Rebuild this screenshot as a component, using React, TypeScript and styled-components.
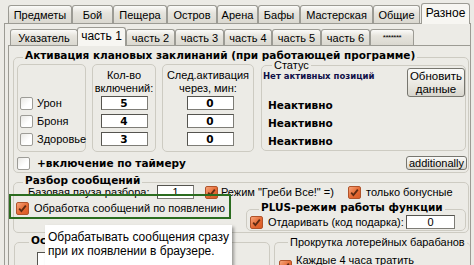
import React from "react";
import styled, { createGlobalStyle } from "styled-components";

const SANS = `"Liberation Sans", Arial, sans-serif`;
const BOLD = `"DejaVu Sans", Verdana, sans-serif`;
const FACE = "#ecebe6";
const LINE = "#cdcbc2";

const GlobalStyle = createGlobalStyle`
  html, body { margin: 0; padding: 0; }
  body {
    background: ${FACE};
    font-family: ${SANS};
    font-size: 11px;
    color: #000;
  }
`;

const Window = styled.div`
  position: relative;
  width: 474px;
  height: 265px;
  overflow: hidden;
  background: ${FACE};
  display: flex;
  flex-direction: column;
`;

/* ---------- tabs ---------- */

const TabStrip = styled.div<{ $inner?: boolean }>`
  display: flex;
  align-items: flex-end;
  flex: none;
  height: ${(p) => (p.$inner ? 21 : 23)}px;
  padding-left: ${(p) => (p.$inner ? 5 : 8)}px;
  position: relative;
  z-index: 2;
`;

const Tab = styled.div<{ $w: number; $active?: boolean; $inner?: boolean; $ml?: number }>`
  box-sizing: border-box;
  flex: none;
  width: ${(p) => p.$w}px;
  height: ${(p) => (p.$inner ? 16 : 18) + (p.$active ? 3 : 0)}px;
  margin-left: ${(p) => p.$ml ?? 0}px;
  margin-bottom: ${(p) => (p.$active ? -1 : 0)}px;
  border: 1px solid #9c9b94;
  border-bottom: none;
  border-radius: 3px 3px 0 0;
  background: ${(p) =>
    p.$active ? "#f7f6f2" : "linear-gradient(#fbfbf9, #e6e4dd 40%, #dad8d0)"};
  display: flex;
  align-items: center;
  justify-content: center;
  padding-bottom: ${(p) => (p.$active ? 2 : 0)}px;
  font-size: ${(p) => (p.$active ? 12 : 11)}px;
  line-height: 12px;
  white-space: nowrap;
  position: relative;
  z-index: ${(p) => (p.$active ? 2 : 1)};
`;

const Stars = styled.span`
  font-size: 8px;
  align-self: flex-start;
  margin-top: 2px;
  letter-spacing: -0.5px;
`;

const OuterPanel = styled.div`
  flex: 1;
  margin-left: 4px;
  width: 467px;
  box-sizing: border-box;
  border: 1px solid #9c9b94;
  border-bottom: none;
  display: flex;
  flex-direction: column;
`;

const InnerPanel = styled.div`
  flex: 1;
  margin-left: 3px;
  border-top: 1px solid #9c9b94;
  border-left: 1px solid #9c9b94;
  display: flex;
  flex-direction: column;
`;

/* ---------- group boxes ---------- */

const GroupBox = styled.fieldset`
  margin: 0;
  padding: 0;
  min-width: 0;
  border: 1px solid ${LINE};
  border-radius: 5px;
  box-sizing: border-box;
`;

const Title = styled.legend<{ $plain?: boolean }>`
  margin-left: 9px;
  padding: 0 2px ${(p) => (p.$plain ? 0 : 4)}px;
  font-family: ${(p) => (p.$plain ? SANS : BOLD)};
  font-weight: ${(p) => (p.$plain ? 400 : 700)};
  font-size: ${(p) => (p.$plain ? 11 : 10.5)}px;
  line-height: 13px;
  white-space: nowrap;
`;

const SpellGroup = styled(GroupBox)`
  margin: 3px 1px 0 4px;
  padding-bottom: 2px;
`;

const SpellRow = styled.div`
  display: flex;
  align-items: flex-start;
  margin-top: -2px;
  padding-left: 3px;
`;

const Cell = styled.div<{ $w: number }>`
  box-sizing: border-box;
  width: ${(p) => p.$w}px;
  height: 88px;
  margin-right: 6px;
  border: 1px solid ${LINE};
  border-radius: 5px;
  display: flex;
  flex-direction: column;
  align-items: center;
  padding-top: 4px;
`;

const CheckCell = styled(Cell)`
  align-items: flex-start;
  padding: 31px 0 0 2px;
  gap: 4px;
`;

const CellHead = styled.div`
  text-align: center;
  line-height: 13px;
  margin-bottom: 1px;
  white-space: nowrap;
`;

const Inputs = styled.div<{ $shift?: number }>`
  display: flex;
  flex-direction: column;
  gap: 4px;
  margin-left: ${(p) => p.$shift ?? 0}px;
`;

const Field = styled.div<{ $w: number; $bold?: boolean }>`
  box-sizing: border-box;
  flex: none;
  width: ${(p) => p.$w}px;
  height: 14px;
  background: #fff;
  border: 1px solid #7d7c76;
  border-top-color: #55544f;
  border-left-color: #55544f;
  text-align: center;
  font-family: ${(p) => (p.$bold ? BOLD : SANS)};
  font-weight: ${(p) => (p.$bold ? 700 : 400)};
  font-size: ${(p) => (p.$bold ? 10.5 : 11)}px;
  line-height: 12px;
`;

const StatusGroup = styled(GroupBox)`
  width: 205px;
  height: 92px;
  margin: -5px 0 0 1px;
  padding: 0 0 0 1px;
`;

const StatusTop = styled.div`
  display: flex;
  align-items: flex-start;
  margin-top: -4px;
`;

const NoItems = styled.div`
  margin-top: 3px;
  font-family: ${BOLD};
  font-weight: 700;
  font-size: 8.5px;
  line-height: 10px;
  color: #101048;
  white-space: nowrap;
`;

const Button = styled.div<{ $tall?: boolean }>`
  box-sizing: border-box;
  margin-left: auto;
  padding: 0 2px;
  height: ${(p) => (p.$tall ? 29 : 14)}px;
  min-width: ${(p) => (p.$tall ? 58 : 0)}px;
  border: 1px solid #77766f;
  border-radius: 3px;
  background: linear-gradient(#fafaf8, #e9e7e0 60%, #d8d6ce);
  display: flex;
  align-items: center;
  justify-content: center;
  text-align: center;
  line-height: 13px;
  font-size: ${(p) => (p.$tall ? 11.5 : 11)}px;
  white-space: nowrap;
`;

const StatusLines = styled.div`
  padding-left: 5px;
  margin-top: -1px;
`;

const StatusLine = styled.div`
  height: 18px;
  line-height: 18px;
  font-family: ${BOLD};
  font-weight: 700;
  font-size: 10.5px;
`;

const SpellFooter = styled.div`
  display: flex;
  align-items: center;
  height: 14px;
  margin-top: 4px;
  padding: 0 1px 0 3px;
`;

/* ---------- check boxes ---------- */

const Box = styled.span<{ $on?: boolean }>`
  box-sizing: border-box;
  flex: none;
  width: 13px;
  height: 13px;
  border-radius: 2px;
  border: 1px solid ${(p) => (p.$on ? "#b0532a" : "#9d9c97")};
  background: ${(p) =>
    p.$on
      ? "linear-gradient(135deg, #f6a57c, #e56a33 55%, #d85a26)"
      : "linear-gradient(135deg, #e9e8e4, #ffffff 60%)"};
  display: flex;
  align-items: center;
  justify-content: center;
`;

const CheckLine = styled.div<{ $bold?: boolean; $gap?: number }>`
  display: flex;
  align-items: center;
  gap: ${(p) => p.$gap ?? 4}px;
  height: 14px;
  white-space: nowrap;
  font-family: ${(p) => (p.$bold ? BOLD : SANS)};
  font-weight: ${(p) => (p.$bold ? 700 : 400)};
  font-size: ${(p) => (p.$bold ? 10.5 : 11)}px;
`;

function Check({ on }: { on?: boolean }) {
  return (
    <Box $on={on}>
      {on && (
        <svg width="9" height="9" viewBox="0 0 9 9">
          <path d="M1.2 4.6 L3.4 7 L7.8 1.6" fill="none" stroke="#5e2a12" strokeWidth="1.8" />
        </svg>
      )}
    </Box>
  );
}

/* ---------- message parsing ---------- */

const ParseGroup = styled(GroupBox)`
  margin: 1px 1px 0 4px;
  padding-bottom: 1px;
`;

const PauseRow = styled.div`
  display: flex;
  align-items: center;
  height: 14px;
  margin-top: -6px;
  padding-left: 14px;
`;

const Caption = styled.span<{ $w: number }>`
  flex: none;
  width: ${(p) => p.$w}px;
  white-space: nowrap;
`;

const ModeCheck = styled(CheckLine)`
  margin-left: 11px;
  width: 143px;
`;

const ModeRow = styled.div`
  display: flex;
  align-items: flex-start;
  margin-top: 2px;
  padding-left: 2px;
`;

const PlusGroup = styled(GroupBox)`
  width: 220px;
  margin: 0 2px 0 auto;
  padding: 0 0 1px 3px;
`;

const PlusRow = styled.div`
  display: flex;
  align-items: center;
  height: 14px;
  margin-top: -3px;
  padding-right: 10px;
`;

const GiftField = styled(Field)`
  margin-left: auto;
`;

/* ---------- bottom groups ---------- */

const BottomRow = styled.div`
  display: flex;
  align-items: flex-start;
  margin-left: 5px;
`;

const OtherGroup = styled(GroupBox)`
  width: 256px;
  height: 40px;
  margin-top: 1px;
  padding: 1px 0 0 5px;
`;

const OtherField = styled(Field)`
  margin-left: 17px;
`;

const OtherCheck = styled.div`
  margin-top: 1px;
`;

const LotteryGroup = styled(GroupBox)`
  flex: 1;
  height: 40px;
  margin: 3px 0 0 4px;
  border-right: none;
  padding: 1px 0 0 4px;
`;

const TwoLine = styled.div`
  line-height: 13px;
  font-size: 11px;
  margin-top: 2px;
`;

const LotteryLine = styled.div`
  display: flex;
  align-items: center;
  gap: 4px;
  margin-top: 2px;
`;

/* ---------- overlays ---------- */

const Highlight = styled.div`
  position: absolute;
  left: 9px;
  top: 194px;
  width: 222px;
  height: 25px;
  box-sizing: border-box;
  border: 2px solid #2b6c1f;
  pointer-events: none;
`;

const Tooltip = styled.div`
  position: absolute;
  left: 45px;
  top: 225px;
  width: 187px;
  height: 46px;
  box-sizing: border-box;
  padding: 5px 0 0 3px;
  background: #fff;
  box-shadow: 2px 2px 3px rgba(0, 0, 0, 0.35);
  font-size: 12px;
  line-height: 14px;
  white-space: nowrap;
`;

const outerTabs: [string, number][] = [
  ["Предметы", 64],
  ["Бой", 41],
  ["Пещера", 54],
  ["Остров", 50],
  ["Арена", 41],
  ["Бафы", 42],
  ["Мастерская", 73],
  ["Общие", 47],
];

const innerTabs: [string, number][] = [
  ["часть 2", 49],
  ["часть 3", 49],
  ["часть 4", 48],
  ["часть 5", 49],
  ["часть 6", 49],
];

const spells = [
  { name: "Урон", count: "5", next: "0" },
  { name: "Броня", count: "4", next: "0" },
  { name: "Здоровье", count: "3", next: "0" },
];

export default function App() {
  return (
    <Window>
      <GlobalStyle />
      <TabStrip>
        {outerTabs.map(([t, w]) => (
          <Tab key={t} $w={w}>
            {t}
          </Tab>
        ))}
        <Tab $w={49} $ml={1} $active>
          Разное
        </Tab>
      </TabStrip>

      <OuterPanel>
        <TabStrip $inner>
          <Tab $w={68} $inner>
            Указатель
          </Tab>
          <Tab $w={49} $ml={-1} $inner $active>
            часть 1
          </Tab>
          {innerTabs.map(([t, w]) => (
            <Tab key={t} $w={w} $inner>
              {t}
            </Tab>
          ))}
          <Tab $w={44} $inner>
            <Stars>*******</Stars>
          </Tab>
        </TabStrip>

        <InnerPanel>
          <SpellGroup>
            <Title>Активация клановых заклинаний (при работающей программе)</Title>
            <SpellRow>
              <CheckCell $w={69}>
                {spells.map((s) => (
                  <CheckLine key={s.name}>
                    <Check />
                    {s.name}
                  </CheckLine>
                ))}
              </CheckCell>
              <Cell $w={64}>
                <CellHead>
                  Кол-во
                  <br />
                  включений:
                </CellHead>
                <Inputs>
                  {spells.map((s) => (
                    <Field key={s.name} $w={47} $bold>
                      {s.count}
                    </Field>
                  ))}
                </Inputs>
              </Cell>
              <Cell $w={92}>
                <CellHead>
                  След.активация
                  <br />
                  через, мин:
                </CellHead>
                <Inputs $shift={4}>
                  {spells.map((s) => (
                    <Field key={s.name} $w={47} $bold>
                      {s.next}
                    </Field>
                  ))}
                </Inputs>
              </Cell>
              <StatusGroup>
                <Title $plain>Статус</Title>
                <StatusTop>
                  <NoItems>Нет активных позиций</NoItems>
                  <Button $tall>
                    Обновить
                    <br />
                    данные
                  </Button>
                </StatusTop>
                <StatusLines>
                  {spells.map((s) => (
                    <StatusLine key={s.name}>Неактивно</StatusLine>
                  ))}
                </StatusLines>
              </StatusGroup>
            </SpellRow>
            <SpellFooter>
              <CheckLine $bold $gap={7}>
                <Check />
                +включение по таймеру
              </CheckLine>
              <Button>additionally</Button>
            </SpellFooter>
          </SpellGroup>

          <ParseGroup>
            <Title>Разбор сообщений</Title>
            <PauseRow>
              <Caption $w={129}>Базовая пауза разбора:</Caption>
              <Field $w={37}>1</Field>
              <ModeCheck $gap={3}>
                <Check on />
                Режим "Греби Все!" =)
              </ModeCheck>
              <CheckLine $gap={5}>
                <Check on />
                только бонусные
              </CheckLine>
            </PauseRow>
            <ModeRow>
              <CheckLine $gap={5}>
                <Check on />
                Обработка сообщений по появлению
              </CheckLine>
              <PlusGroup>
                <Title>PLUS-режим работы функции</Title>
                <PlusRow>
                  <CheckLine $gap={5}>
                    <Check on />
                    Отдаривать (код подарка):
                  </CheckLine>
                  <GiftField $w={49}>0</GiftField>
                </PlusRow>
              </PlusGroup>
            </ModeRow>
          </ParseGroup>

          <BottomRow>
            <OtherGroup>
              <Title>Остальное</Title>
              <OtherField $w={150} />
              <OtherCheck>
                <Check />
              </OtherCheck>
            </OtherGroup>
            <LotteryGroup>
              <Title $plain>Прокрутка лотерейных барабанов</Title>
              <LotteryLine>
                <Check on />
                <TwoLine>
                  Каждые 4 часа тратить
                  <br />
                  билеты на прокрутку
                </TwoLine>
              </LotteryLine>
            </LotteryGroup>
          </BottomRow>
        </InnerPanel>
      </OuterPanel>

      <Highlight />
      <Tooltip>
        Обрабатывать сообщения сразу
        <br />
        при их появлении в браузере.
      </Tooltip>
    </Window>
  );
}
